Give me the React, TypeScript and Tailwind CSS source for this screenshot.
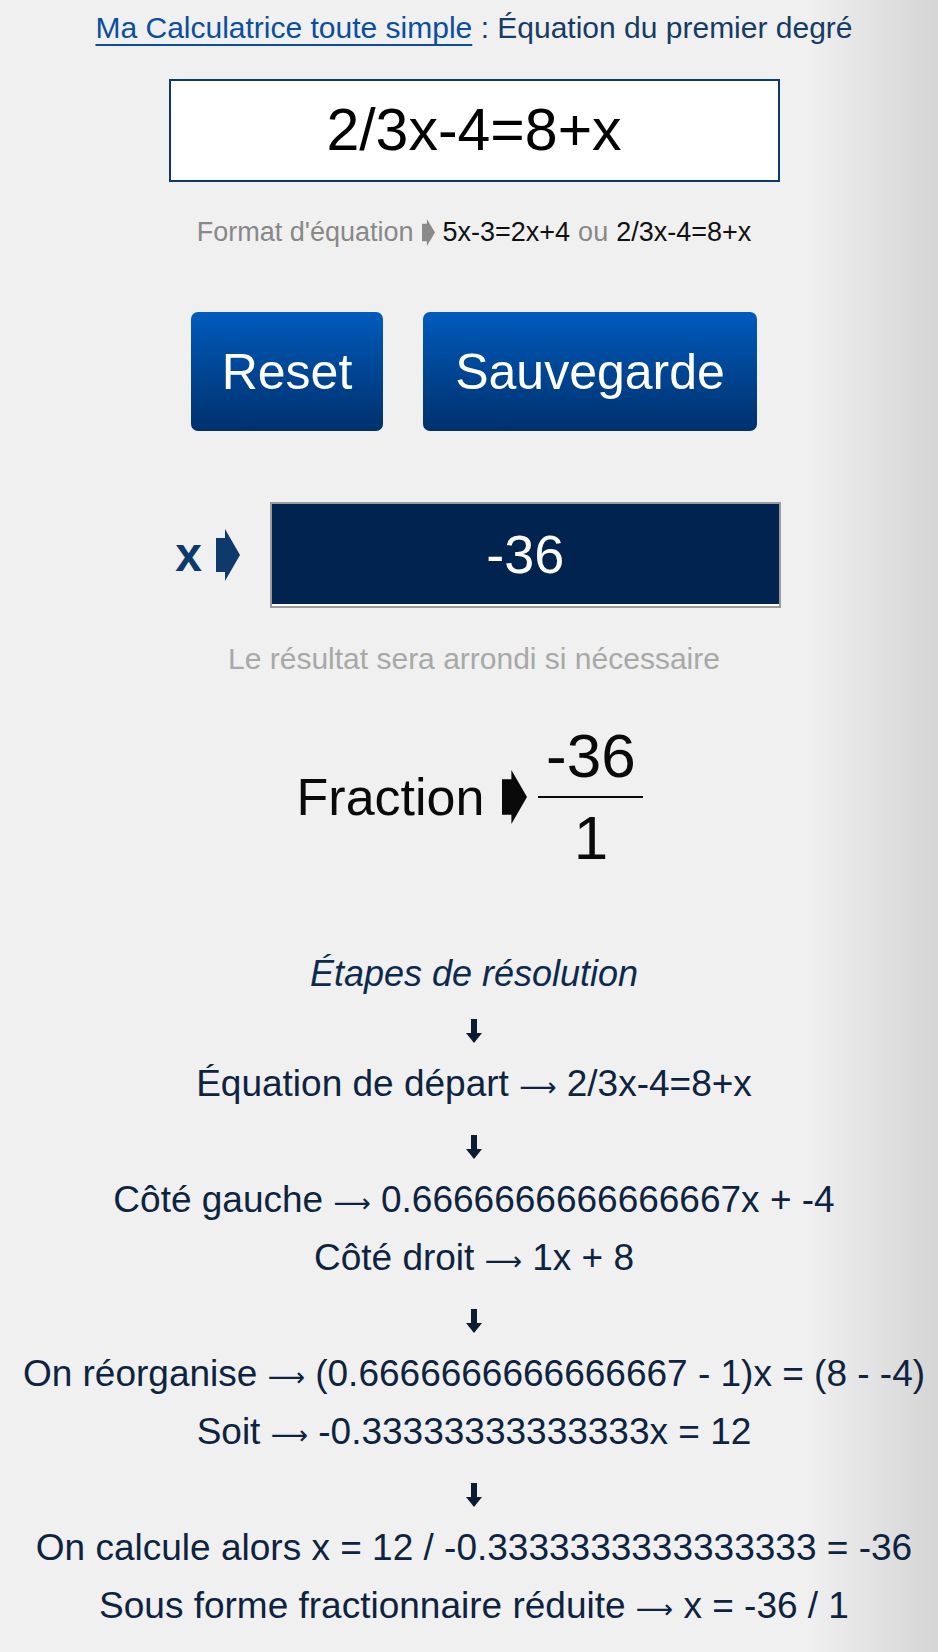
import React from "react";

function PointerArrow({ className }: { className?: string }) {
    return (
        <svg viewBox="0 0 24 52" className={className} preserveAspectRatio="none" fill="currentColor">
            <polygon points="0,9 9,9 9,0 24,26 9,52 9,43 0,43" />
        </svg>
    );
}

function DownArrow() {
    return (
        <svg viewBox="0 0 16 24" className="w-[16px] h-[24px] text-[#0b1b30]" fill="currentColor">
            <rect x="5" y="0" width="6" height="15" />
            <polygon points="0,14 16,14 8,24" />
        </svg>
    );
}

const groups: string[][] = [
    ["Équation de départ → 2/3x-4=8+x"],
    ["Côté gauche → 0.6666666666666667x + -4", "Côté droit → 1x + 8"],
    ["On réorganise → (0.6666666666666667 - 1)x = (8 - -4)", "Soit → -0.33333333333333x = 12"],
    ["On calcule alors x = 12 / -0.3333333333333333 = -36", "Sous forme fractionnaire réduite → x = -36 / 1"],
];

// long thin arrow, taken from DejaVu
function StepLine({ text }: { text: string }) {
    const parts = text.split("→");
    return (
        <p className="text-[37px] leading-[58px] text-[#0e2340] whitespace-nowrap">
            {parts.map((part, i) => (
                <React.Fragment key={i}>
                    {i > 0 && <span className="font-['DejaVu_Sans',sans-serif] text-[26px] leading-none">⟶</span>}
                    {part}
                </React.Fragment>
            ))}
        </p>
    );
}

export default function App() {
    return (
        <div
            className="min-h-screen w-full pl-[10px] pb-[17px] flex flex-col items-center bg-[linear-gradient(to_right,#f0f0f0_0%,#f0f0f0_86%,#d5d5d5_100%)]"
            style={{ fontFamily: '"Liberation Sans", Arial, sans-serif' }}
        >
            {/* Title */}
            <h1 className="pt-[10px] text-[30px] leading-[36px] whitespace-nowrap text-[#153b66]">
                <a href="#" className="text-[#0b4d9e] underline decoration-2 underline-offset-[6px]">
                    Ma Calculatrice toute simple
                </a>{" "}
                : Équation du premier degré
            </h1>

            {/* Equation input */}
            <div className="mt-[33px] w-[611px] h-[103px] border-2 border-[#0d3a6b] bg-white flex items-center justify-center">
                <span className="text-[59px] leading-none text-black">2/3x-4=8+x</span>
            </div>

            {/* Format hint */}
            <p className="mt-[34px] text-[27px] leading-[32px] whitespace-nowrap flex items-center gap-[8px]">
                <span className="text-[#888888]">Format d'équation</span>
                <PointerArrow className="w-[13px] h-[27px] text-[#8a8a8a]" />
                <span className="text-[#111111]">5x-3=2x+4</span>
                <span className="text-[#888888]">ou</span>
                <span className="text-[#111111]">2/3x-4=8+x</span>
            </p>

            {/* Buttons */}
            <div className="mt-[64px] flex gap-[40px]">
                <button className="w-[192px] h-[119px] rounded-[7px] bg-gradient-to-b from-[#005bbd] to-[#00316d] text-white text-[50px] leading-none">
                    Reset
                </button>
                <button className="w-[334px] h-[119px] rounded-[7px] bg-gradient-to-b from-[#005bbd] to-[#00316d] text-white text-[50px] leading-none">
                    Sauvegarde
                </button>
            </div>

            {/* Result */}
            <div className="mt-[71px] ml-[8px] flex items-center">
                <span className="text-[48px] leading-none font-bold text-[#0d3a6b]">x</span>
                <PointerArrow className="ml-[14px] w-[24px] h-[52px] text-[#0d3a6b]" />
                <div className="ml-[30px] w-[511px] h-[106px] border-2 border-[#9a9a9a] bg-[#00234f]">
                    <div className="h-full border-b-2 border-white flex items-center justify-center">
                        <span className="text-[54px] leading-none text-white">-36</span>
                    </div>
                </div>
            </div>

            <p className="mt-[33px] text-[30px] leading-[36px] text-[#a8a8a8] whitespace-nowrap">
                Le résultat sera arrondi si nécessaire
            </p>

            {/* Fraction */}
            <div className="mt-[48px] mr-[8px] flex items-center text-[#0a0a0a]">
                <span className="text-[52px] leading-none">Fraction</span>
                <PointerArrow className="ml-[18px] w-[25px] h-[54px] text-[#0a0a0a]" />
                <div className="ml-[11px] w-[105px] flex flex-col items-center">
                    <span className="text-[62px] leading-[62px]">-36</span>
                    <div className="mt-[9px] w-full h-[2px] bg-[#0a0a0a]" />
                    <span className="mt-[9px] text-[62px] leading-[62px]">1</span>
                </div>
            </div>

            {/* Steps */}
            <h2 className="mt-[82px] text-[36px] leading-[46px] italic text-[#0d2a4e] whitespace-nowrap">
                Étapes de résolution
            </h2>

            {groups.map((lines, i) => (
                <React.Fragment key={i}>
                    <div className="h-[58px] pt-[22px]">
                        <DownArrow />
                    </div>
                    {lines.map((line) => (
                        <StepLine key={line} text={line} />
                    ))}
                </React.Fragment>
            ))}
        </div>
    );
}
